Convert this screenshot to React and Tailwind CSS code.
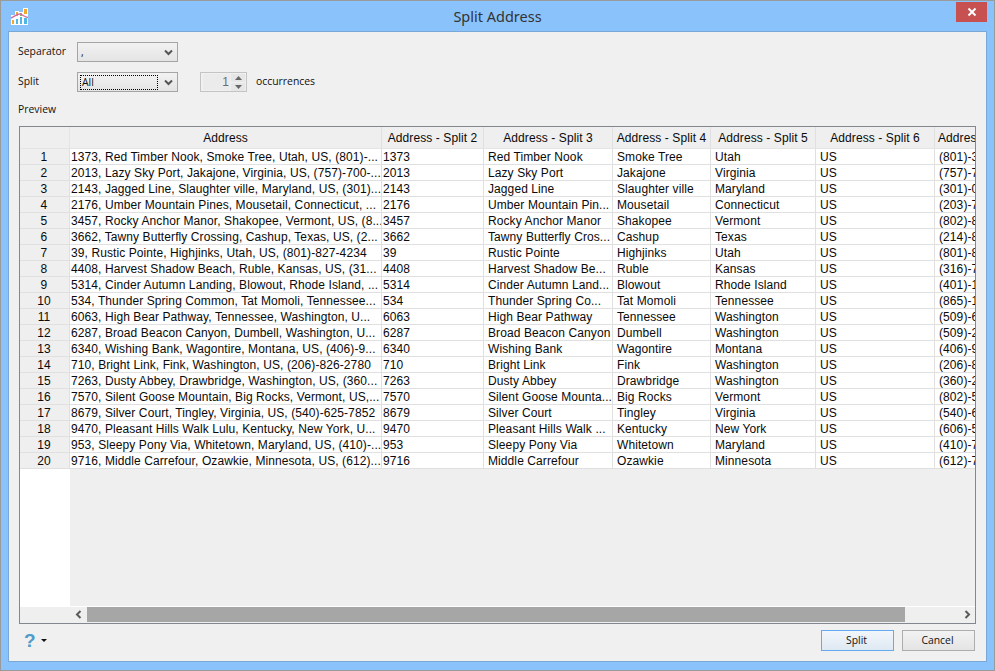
const rows = [
  ["1373, Red Timber Nook, Smoke Tree, Utah, US, (801)-...", "1373", "Red Timber Nook", "Smoke Tree", "Utah", "US", "(801)-345"],
  ["2013, Lazy Sky Port, Jakajone, Virginia, US, (757)-700-...", "2013", "Lazy Sky Port", "Jakajone", "Virginia", "US", "(757)-700"],
  ["2143, Jagged Line, Slaughter ville, Maryland, US, (301)...", "2143", "Jagged Line", "Slaughter ville", "Maryland", "US", "(301)-012"],
  ["2176, Umber Mountain Pines, Mousetail, Connecticut, ...", "2176", "Umber Mountain Pin...", "Mousetail", "Connecticut", "US", "(203)-712"],
  ["3457, Rocky Anchor Manor, Shakopee, Vermont, US, (8...", "3457", "Rocky Anchor Manor", "Shakopee", "Vermont", "US", "(802)-834"],
  ["3662, Tawny Butterfly Crossing, Cashup, Texas, US, (2...", "3662", "Tawny Butterfly Cros...", "Cashup", "Texas", "US", "(214)-856"],
  ["39, Rustic Pointe, Highjinks, Utah, US, (801)-827-4234", "39", "Rustic Pointe", "Highjinks", "Utah", "US", "(801)-827"],
  ["4408, Harvest Shadow Beach, Ruble, Kansas, US, (31...", "4408", "Harvest Shadow Be...", "Ruble", "Kansas", "US", "(316)-745"],
  ["5314, Cinder Autumn Landing, Blowout, Rhode Island, ...", "5314", "Cinder Autumn Land...", "Blowout", "Rhode Island", "US", "(401)-123"],
  ["534, Thunder Spring Common, Tat Momoli, Tennessee...", "534", "Thunder Spring Co...", "Tat Momoli", "Tennessee", "US", "(865)-190"],
  ["6063, High Bear Pathway, Tennessee, Washington, U...", "6063", "High Bear Pathway", "Tennessee", "Washington", "US", "(509)-612"],
  ["6287, Broad Beacon Canyon, Dumbell, Washington, U...", "6287", "Broad Beacon Canyon", "Dumbell", "Washington", "US", "(509)-245"],
  ["6340, Wishing Bank, Wagontire, Montana, US, (406)-9...", "6340", "Wishing Bank", "Wagontire", "Montana", "US", "(406)-912"],
  ["710, Bright Link, Fink, Washington, US, (206)-826-2780", "710", "Bright Link", "Fink", "Washington", "US", "(206)-826"],
  ["7263, Dusty Abbey, Drawbridge, Washington, US, (360...", "7263", "Dusty Abbey", "Drawbridge", "Washington", "US", "(360)-245"],
  ["7570, Silent Goose Mountain, Big Rocks, Vermont, US,...", "7570", "Silent Goose Mounta...", "Big Rocks", "Vermont", "US", "(802)-512"],
  ["8679, Silver Court, Tingley, Virginia, US, (540)-625-7852", "8679", "Silver Court", "Tingley", "Virginia", "US", "(540)-625"],
  ["9470, Pleasant Hills Walk Lulu, Kentucky, New York, U...", "9470", "Pleasant Hills Walk ...", "Kentucky", "New York", "US", "(606)-534"],
  ["953, Sleepy Pony Via, Whitetown, Maryland, US, (410)-...", "953", "Sleepy Pony Via", "Whitetown", "Maryland", "US", "(410)-712"],
  ["9716, Middle Carrefour, Ozawkie, Minnesota, US, (612)...", "9716", "Middle Carrefour", "Ozawkie", "Minnesota", "US", "(612)-745"],
];

const headers = ["Address", "Address - Split 2", "Address - Split 3", "Address - Split 4", "Address - Split 5", "Address - Split 6", "Address - Split 7"];
const widths = ["w-[312px]", "w-[102px]", "w-[129px]", "w-[98px]", "w-[105px]", "w-[119px]", "w-[41px]"];
const pads = ["pl-[1px]", "pl-[1px]", "pl-[4px]", "pl-[4px]", "pl-[4px]", "pl-[4px]", "pl-[4px]"];

function Chevron() {
  return (
    <svg width="9" height="7" viewBox="0 0 9 7" className="text-[#555]">
      <path d="M1 1.5 L4.5 5 L8 1.5" fill="none" stroke="currentColor" strokeWidth="2" />
    </svg>
  );
}

function Combo({ focused, children }) {
  return (
    <div className="flex h-[20px] w-[101px] items-center border border-[#a5a5a5] bg-gradient-to-b from-[#f2f2f2] to-[#e4e4e4] pl-[2px] pr-[4px]">
      <div className={`h-[15px] w-[78px] pl-[1px] leading-[13px] ${focused ? "border border-dotted border-black" : "pt-[1px]"}`}>
        {children}
      </div>
      <div className="ml-auto">
        <Chevron />
      </div>
    </div>
  );
}

function Logo() {
  return (
    <svg width="17" height="17" viewBox="0 0 17 17">
      <rect x="0" y="7" width="4" height="10" fill="#fff" />
      <rect x="4" y="3" width="4" height="14" fill="#fff" />
      <rect x="8" y="4" width="4" height="13" fill="#fff" />
      <rect x="12" y="0" width="5" height="17" fill="#fff" />
      <rect x="1" y="12" width="2" height="4" fill="#f2a72e" />
      <rect x="5" y="4" width="2" height="4" fill="#f2a72e" />
      <rect x="5" y="11" width="2" height="5" fill="#52b6e4" />
      <rect x="9" y="5" width="2" height="3" fill="#7cc05a" />
      <rect x="9" y="9" width="2" height="7" fill="#52b6e4" />
      <rect x="13" y="1" width="3" height="5" fill="#f2a72e" />
      <rect x="13" y="10" width="3" height="6" fill="#52b6e4" />
      <path d="M0 10 C3 9 6 5.5 9 6 C11.5 6.5 13.5 9 17 9.5" fill="none" stroke="#d56fa0" strokeWidth="1.4" />
    </svg>
  );
}

export default function App() {
  return (
    <div className="flex h-[671px] w-[995px] flex-col border border-[#9a9a9a] bg-[#8ac3fb] font-['Open_Sans',sans-serif] text-[10.4px] text-[#111]">
      {/* title bar */}
      <div className="relative flex h-[30px] shrink-0 items-center justify-center">
        <div className="absolute left-[10px] top-[7px]">
          <Logo />
        </div>
        <span className="mt-[1px] font-['Noto_Sans',sans-serif] text-[14.5px] text-[#333]">Split Address</span>
        <div className="absolute right-[7px] top-[1px] flex h-[20px] w-[31px] items-center justify-center bg-[#c75050]">
          <svg width="10" height="10" viewBox="0 0 10 10">
            <path d="M1.5 1.5 L8.5 8.5 M8.5 1.5 L1.5 8.5" stroke="#fff" strokeWidth="2" />
          </svg>
        </div>
      </div>

      {/* body */}
      <div className="mx-[7px] flex h-[631px] flex-col border border-[#79a8d6] bg-[#f0f0f0] pl-[10px] pr-[10px]">
        <div className="-ml-px mt-[10px] flex h-[20px] items-center">
          <span className="w-[59px]">Separator</span>
          <Combo>,</Combo>
        </div>
        <div className="-ml-px mt-[10px] flex h-[20px] items-center">
          <span className="w-[59px]">Split</span>
          <Combo focused>All</Combo>
          <div className="ml-[22px] flex h-[20px] w-[47px] items-center border border-[#c4c4c4] bg-[#f0f0f0] pl-[2px]">
            <div className="flex h-[16px] w-[27px] items-center justify-end bg-[#ebebeb] pr-[1px] font-['Liberation_Sans',sans-serif] text-[12px] text-[#6d6d6d]">1</div>
            <div className="ml-[1px] flex flex-col gap-[1px]">
              <div className="flex h-[8px] w-[14px] items-center justify-center bg-[#e6e6e6]">
                <svg width="7" height="4" viewBox="0 0 7 4"><path d="M3.5 0 L7 4 L0 4 Z" fill="#666" /></svg>
              </div>
              <div className="flex h-[8px] w-[14px] items-center justify-center bg-[#e6e6e6]">
                <svg width="7" height="4" viewBox="0 0 7 4"><path d="M0 0 L7 0 L3.5 4 Z" fill="#666" /></svg>
              </div>
            </div>
          </div>
          <span className="ml-[9px]">occurrences</span>
        </div>
        <div className="-ml-px mt-[10px] h-[16px] leading-[15px]">Preview</div>

        {/* table */}
        <div className="mt-[8px] flex h-[498px] w-[957px] shrink-0 flex-col overflow-hidden border border-[#828790] bg-[#efefef] font-['Liberation_Sans',sans-serif] text-[12px] tracking-[0.09px] text-[#0a0a0a]">
          <div className="flex h-[22px] shrink-0 border-b border-[#e4e4e4]">
            <div className="w-[50px] shrink-0 border-r border-[#e4e4e4]" />
            {headers.map((h, i) => (
              <div
                key={h}
                className={`flex shrink-0 items-center justify-center overflow-hidden whitespace-nowrap border-r border-[#e0e0e0] ${widths[i]}`}
              >
                {i === 6 ? <span className="w-full pl-[3px]">{h}</span> : h}
              </div>
            ))}
          </div>
          {rows.map((row, r) => (
            <div key={row[1]} className="flex h-[16px] shrink-0 border-b border-[#e0e0e0] leading-[16px]">
              <div className="w-[50px] shrink-0 border-r border-[#e0e0e0] pr-[1px] text-center">{r + 1}</div>
              {row.map((cell, i) => (
                <div
                  key={i}
                  className={`shrink-0 overflow-hidden whitespace-nowrap border-r border-[#e0e0e0] bg-white ${widths[i]} ${pads[i]}`}
                >
                  {cell}
                </div>
              ))}
            </div>
          ))}
          <div className="flex min-h-0 flex-1">
            <div className="w-[50px] shrink-0 bg-white" />
          </div>
          {/* horizontal scrollbar */}
          <div className="flex h-[17px] shrink-0 border-t border-white pb-[1px]">
            <div className="w-[50px] shrink-0" />
            <div className="flex w-[17px] items-center justify-center">
              <svg width="7" height="9" viewBox="0 0 7 9"><path d="M5.5 1 L2 4.5 L5.5 8" fill="none" stroke="#5a5a5a" strokeWidth="2" /></svg>
            </div>
            <div className="w-[818px] bg-[#a6a6a6]" />
            <div className="flex flex-1 items-center justify-end pr-[4px]">
              <svg width="7" height="9" viewBox="0 0 7 9"><path d="M1.5 1 L5 4.5 L1.5 8" fill="none" stroke="#5a5a5a" strokeWidth="2" /></svg>
            </div>
          </div>
        </div>

        {/* footer */}
        <div className="mt-[6px] flex items-center pr-[1px]">
          <span className="ml-[5px] font-['Liberation_Sans',sans-serif] text-[19px] font-bold leading-[20px] text-[#4f9bc9]">?</span>
          <svg width="6" height="3" viewBox="0 0 6 3" className="ml-[5px]"><path d="M0 0 L6 0 L3 3 Z" fill="#111" /></svg>
          <button className="ml-auto h-[21px] w-[73px] border border-[#64aaf2] bg-gradient-to-b from-[#f1f6fb] to-[#dfe9f3] pr-[2px]">Split</button>
          <button className="ml-[8px] h-[21px] w-[73px] border border-[#adadad] bg-gradient-to-b from-[#f2f2f2] to-[#e4e4e4] pr-[2px]">Cancel</button>
        </div>
      </div>
    </div>
  );
}
